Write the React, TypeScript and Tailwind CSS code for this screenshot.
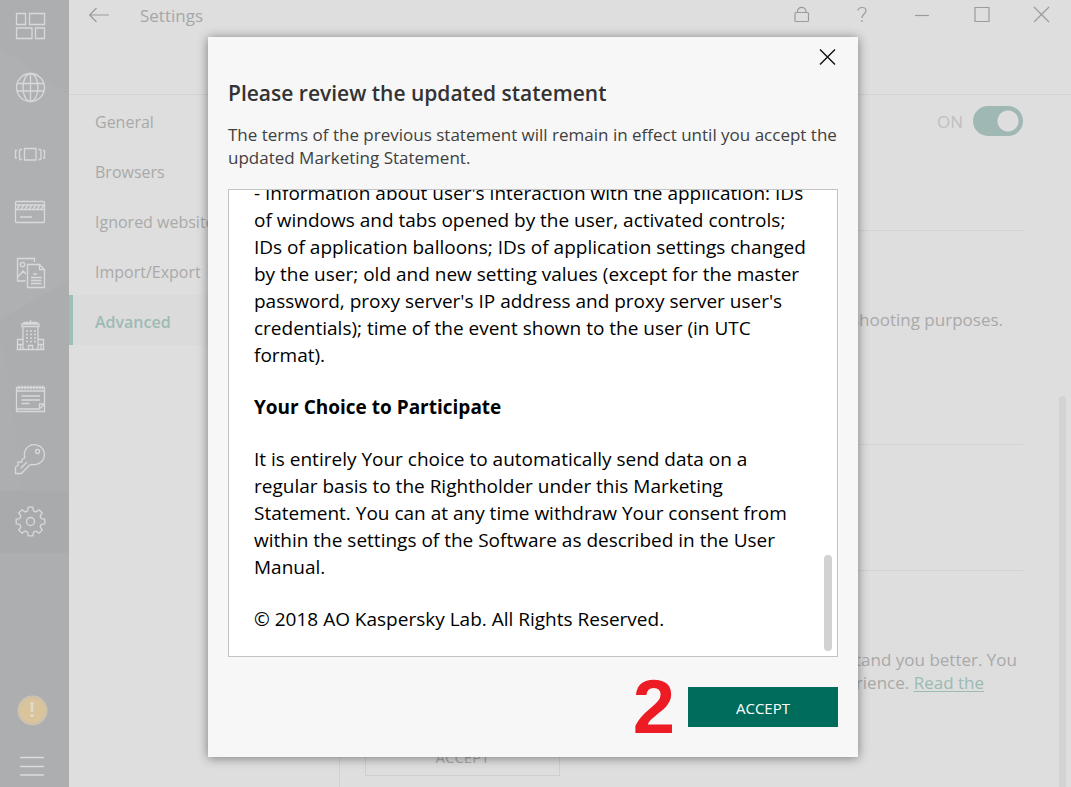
import type { ReactNode } from "react";

function gearPath(cx: number, cy: number, outer: number, inner: number) {
  const points: string[] = [];
  const at = (r: number, deg: number) => {
    const a = (deg * Math.PI) / 180;
    return `${(cx + r * Math.cos(a)).toFixed(2)} ${(cy + r * Math.sin(a)).toFixed(2)}`;
  };
  for (let i = 0; i < 8; i++) {
    const c = i * 45 - 90;
    points.push(`${i === 0 ? "M" : "L"}${at(inner, c - 14)}`);
    points.push(`L${at(outer, c - 9)}`);
    points.push(`L${at(outer, c + 9)}`);
    points.push(`L${at(inner, c + 14)}`);
    points.push(`Q${at(inner - 1.6, c + 22.5)} ${at(inner, c + 31)}`);
  }
  return points.join(" ") + "Z";
}

const navItems: { label: string; icon: ReactNode }[] = [
  {
    label: "All entries",
    icon: <path d="M6.5 7.5h9v11h-9zM19.5 7.5h15v11h-15zM6.5 22h15.500v10.500h-15.500zM25.500 22h9v10.500h-9z" />,
  },
  {
    label: "Websites",
    icon: (
      <>
        <circle cx="20.500" cy="19.500" r="14" />
        <ellipse cx="20.500" cy="19.500" rx="7.500" ry="14" />
        <path d="M20.500 5.500v28M7 15.500h27M7 23h27" />
      </>
    ),
  },
  {
    label: "Applications",
    icon: <path d="M14.500 18.500h11.500v11.500h-11.500zM12 19.500h-2l-.5 1v8l.5 1h2M7 20.500h-1.500v7.500h1.500M28.500 19.500h2l.5 1v8l-.5 1h-2M33 20.500h1.500v7.500h-1.500" />,
  },
  {
    label: "Bank cards",
    icon: (
      <>
        <rect x="5.500" y="9.500" width="29" height="21" rx="1" />
        <path d="M5.500 13h29M5.500 17.500h29M10 25h12" />
        <path d="M7 17l3-4M11 17l3-4M15 17l3-4M19 17l3-4M23 17l3-4M27 17l3-4M31 17l3-4" />
      </>
    ),
  },
  {
    label: "Documents",
    icon: (
      <>
        <path d="M24.500 8V4.500h-17v22.500h8" />
        <circle cx="12.500" cy="10.500" r="2.200" />
        <path d="M8 23l5-6 3 3M17.500 10.500h12l5 5v18h-17zM29.500 10.500v5h5M21 23.500h10.500M21 26.500h10.500M21 29.500h10.500M23 20h4" />
      </>
    ),
  },
  {
    label: "Addresses",
    icon: (
      <>
        <path d="M6.500 33.500h28M13 33.500v-23h15v23M12 10.500v-2.500h17v2.500zM14 8V6.500h13v1.500M20.500 6.500V4M7.500 33.500v-10h5.500M28 23.500h5.500v10M7.500 28.500h5.500M28 28.500h5.500M10.500 28.500v5M31 28.500v5M18.500 33.500v-4h4v4" />
        <path d="M16 15h2M20 15h2M24 15h2M16 18.500h2M20 18.500h2M24 18.500h2M16 22h2M20 22h2M24 22h2M16 25.500h2M20 25.500h2M24 25.500h2" />
      </>
    ),
  },
  {
    label: "Notes",
    icon: (
      <>
        <path d="M6.500 9.500h28v24h-28zM6.500 13h28M6.500 31h23l5-5M29.500 31v-5h5M11.500 18h18.500M11.500 22h18.500M11.500 25.500h8" />
        <path d="M9 7.500v4M12 7.500v4M15 7.500v4M18 7.500v4M21 7.500v4M24 7.500v4M27 7.500v4M30 7.500v4M32.500 7.500v4" />
      </>
    ),
  },
  {
    label: "Passwords",
    icon: (
      <>
        <path d="M14.800 17.500A10 10 0 1 1 22 24.300L19.500 25 11.500 33.500h-6v-6.500l2.500-1.500v-3.500h3.500l1-3 2-1z" />
        <circle cx="27.500" cy="11.500" r="2" />
        <path d="M10.500 28.500l6.500-6.500" />
      </>
    ),
  },
  {
    label: "Settings",
    icon: (
      <>
        <path d={gearPath(20.5, 19.5, 14.5, 11.6)} />
        <circle cx="20.500" cy="19.500" r="4" />
      </>
    ),
  },
];

function Sidebar() {
  return (
    <aside className="relative flex w-[69px] shrink-0 flex-col bg-[#adaeb0]">
      <svg className="absolute inset-0 h-full w-full" viewBox="0 0 69 787" preserveAspectRatio="none" aria-hidden="true">
        <path d="M0 48L69 95V280L0 320z" fill="#afb0b2" />
        <path d="M0 320L69 280V490H22z" fill="#acadaf" />
        <path d="M0 552H69V787H0z" fill="#acaeb0" />
      </svg>
      <nav className="relative flex flex-col">
        {navItems.map((item, i) => (
          <button
            key={item.label}
            type="button"
            aria-label={item.label}
            className={
              i === 0
                ? "flex h-[57px] items-end pb-[11px] pl-[10px]"
                : i === 8
                  ? "flex h-[62px] items-end bg-[#a9aaac] pb-[11px] pl-[10px]"
                  : "flex h-[62px] items-end pb-[11px] pl-[10px]"
            }
          >
            <svg width="40" height="40" viewBox="0 0 40 40" fill="none" stroke="#d8d9da" strokeWidth="1.300">
              {item.icon}
            </svg>
          </button>
        ))}
      </nav>
      <div className="relative mt-auto flex flex-col gap-[30px] pb-[10px]">
        <button type="button" aria-label="Warnings" className="ml-[17px] w-[31px]">
          <svg width="31" height="31" viewBox="0 0 31 31">
            <circle cx="15.500" cy="15.500" r="15" fill="#cfc2ac" />
            <circle cx="15.500" cy="15.500" r="12.500" fill="#d9c49c" />
            <path d="M13.500 7h3l-.4 10h-2.200z" fill="#e3dccd" />
            <circle cx="15" cy="20.500" r="1.600" fill="#e3dccd" />
          </svg>
        </button>
        <button type="button" aria-label="Menu" className="ml-5 w-6">
          <svg width="24" height="21" viewBox="0 0 24 21" stroke="#dadbdc" strokeWidth="1.300">
            <path d="M0 1.500h24M0 10.500h24M0 19h24" />
          </svg>
        </button>
      </div>
    </aside>
  );
}

const windowButtons: { label: string; icon: ReactNode }[] = [
  { label: "Lock", icon: <rect x="4" y="7.500" width="13.500" height="9" rx="1" /> },
  { label: "Help", icon: <path d="M7 5.500C7.500 1.500 15 1.500 15 5.500c0 3.500-4 3.500-4 7.500M11 15v2" /> },
  { label: "Minimize", icon: <path d="M4 10.500h14" /> },
  { label: "Maximize", icon: <path d="M4 2.500h14v14H4z" /> },
  { label: "Close", icon: <path d="M3 2l15 15M18 2L3 17" /> },
];

function Header() {
  return (
    <header className="flex h-[95px] items-start justify-between border-b border-[#d2d2d2]">
      <div className="flex h-8 items-center pl-5">
        <button type="button" aria-label="Back">
          <svg width="20" height="16" viewBox="0 0 20 16" fill="none" stroke="#9b9b9b" strokeWidth="1.200">
            <path d="M7.500 0L.7 7l6.800 7M1 7h19" />
          </svg>
        </button>
        <h1 className="ml-[31px] text-[17px] text-[#a6a6a6]">Settings</h1>
      </div>
      <div className="flex h-[30px] items-center">
        {windowButtons.map((b) => (
          <button key={b.label} type="button" aria-label={b.label} className="flex w-[60px] justify-center">
            <svg width="20" height="20" viewBox="0 0 20 20" fill="none" stroke="#9b9b9b" strokeWidth="1.200">
              {b.icon}
              {b.label === "Lock" && <path d="M6.500 7.500V6.500a4.200 4.200 0 0 1 8.400 0v1" />}
            </svg>
          </button>
        ))}
      </div>
    </header>
  );
}

const tabs = ["General", "Browsers", "Ignored websites", "Import/Export", "Advanced"];

export default function App() {
  return (
    <div className="relative flex h-screen overflow-hidden bg-[#dedede] font-['Open_Sans','Noto_Sans',sans-serif]">
      <Sidebar />
      <div className="flex min-w-0 flex-1 flex-col">
        <Header />
        <div className="flex min-h-0 flex-1">
          <nav className="flex w-[271px] shrink-0 flex-col border-r border-[#d2d2d2] text-[16px]">
            {tabs.map((tab) => (
              <a
                key={tab}
                href="#"
                className={
                  tab === "Advanced"
                    ? "flex h-[50px] items-center border-l-4 border-[#9dbfb8] bg-[#dbdbdb] pt-[3px] pl-[22px] font-semibold text-[#9dbab4]"
                    : "flex h-[50px] items-center pt-[3px] pl-[26px] text-[#a9a9a9]"
                }
              >
                {tab}
              </a>
            ))}
          </nav>
          <main className="flex min-w-0 flex-1 flex-col pr-12 pl-[25px] text-[17px] leading-[23px] text-[#a9a9a9]">
            <section className="h-[136px] shrink-0 border-b border-[#d2d2d2] pt-[11px]">
              <label className="flex items-center justify-end gap-[10px] text-[#c0c0c0]">
                ON
                <input
                  type="checkbox"
                  defaultChecked
                  className="h-[30px] w-[50px] appearance-none rounded-full bg-[#a0b8b4] bg-[radial-gradient(circle_at_35px_15px,#dedede_10px,transparent_11px)]"
                />
              </label>
            </section>
            <section className="h-[214px] shrink-0 border-b border-[#d2d2d2] pt-[77px] pr-5 text-right">
              <p>shooting purposes.</p>
            </section>
            <section className="h-[126px] shrink-0 border-b border-[#d2d2d2]" />
            <section className="flex shrink-0 flex-col pt-[77px]">
              <p className="pr-[6px] text-right">stand you better. You</p>
              <p className="pr-[39px] text-right">
                erience.{" "}
                <a href="#" className="text-[#9bbab2] underline underline-offset-2">
                  Read the
                </a>
              </p>
              <button type="button" className="mt-[42px] h-10 w-[195px] border border-[#cfcfcf] pt-[2px] text-[15px]">
                ACCEPT
              </button>
            </section>
          </main>
        </div>
      </div>
      <div className="absolute right-[5px] bottom-0 h-[391px] w-[7px] rounded-t-full bg-[#d3d3d4]" />

      <div className="absolute inset-0 flex items-start justify-center pt-[37px] pr-[5px]">
        <div
          role="dialog"
          aria-labelledby="dialog-title"
          className="flex w-[650px] flex-col bg-[#f7f7f7] px-5 pb-[30px] shadow-[0_1px_10px_rgba(0,0,0,0.45)]"
        >
          <div className="flex h-10 items-center justify-end">
            <button type="button" aria-label="Close dialog" className="mr-[2px]">
              <svg width="17" height="17" viewBox="0 0 17 17" stroke="#111" strokeWidth="1.400">
                <path d="M1 .5l15 15M16 .5L1 15.500" />
              </svg>
            </button>
          </div>
          <h2 id="dialog-title" className="text-[21px] leading-8 font-semibold text-[#333]">
            Please review the updated statement
          </h2>
          <p className="mt-[14px] text-[17px] leading-[23px] text-[#404040]">
            The terms of the previous statement will remain in effect until you accept the updated Marketing Statement.
          </p>
          <div className="relative mt-5 flex h-[468px] flex-col justify-end gap-[25px] overflow-hidden border border-[#c3c3c3] bg-white pr-6 pb-[23px] pl-[25px] text-[19px] leading-[27px] text-black">
            <p>
              - Information about user's interaction with the application: IDs of windows and tabs opened by the user,
              activated controls; IDs of application balloons; IDs of application settings changed by the user; old and
              new setting values (except for the master password, proxy server's IP address and proxy server user's
              credentials); time of the event shown to the user (in UTC format).
            </p>
            <h3 className="font-bold">Your Choice to Participate</h3>
            <p>
              It is entirely Your choice to automatically send data on a regular basis to the Rightholder under this
              Marketing Statement. You can at any time withdraw Your consent from within the settings of the Software as
              described in the User Manual.
            </p>
            <p>© 2018 AO Kaspersky Lab. All Rights Reserved.</p>
            <div className="absolute right-[5px] bottom-[5px] h-24 w-2 rounded-full bg-[#d2d2d2]" />
          </div>
          <div className="mt-[30px] flex h-10 items-center justify-end gap-[13px]">
            <span className="font-['Liberation_Sans_Narrow','Liberation_Sans',sans-serif] text-[76px] leading-10 font-bold text-[#ed1c24]">
              2
            </span>
            <button type="button" className="h-10 w-[150px] bg-[#006d5c] pt-[2px] text-[15px] text-white">
              ACCEPT
            </button>
          </div>
        </div>
      </div>
    </div>
  );
}
